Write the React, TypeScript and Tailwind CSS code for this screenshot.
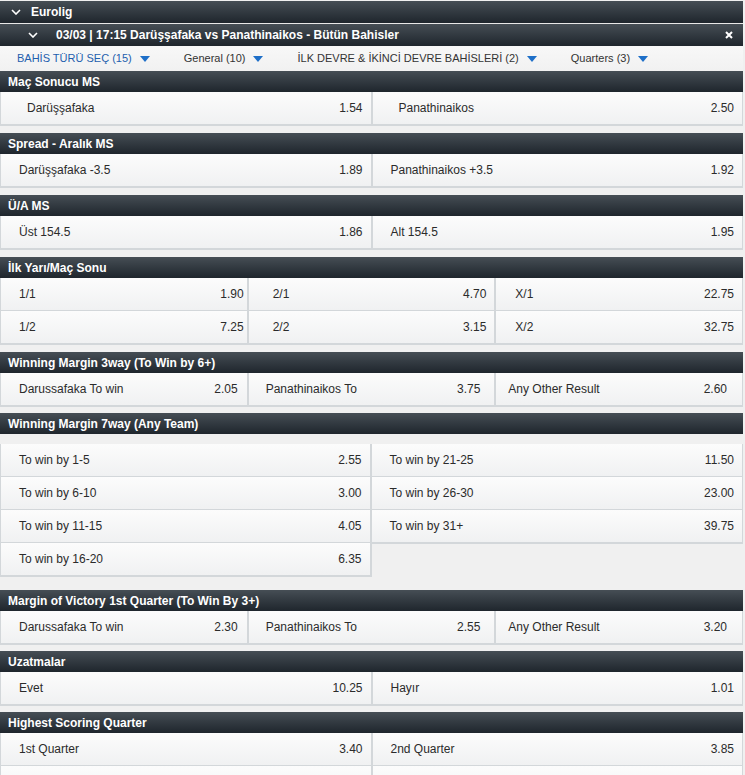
import React from "react";

type Cell = { label: string; odd: string; pl?: number; pr?: number };

type Section = { title: string; cols: 2 | 3; cells: Cell[]; tight?: boolean };

const plClass: Record<number, string> = {
  12: "pl-[12px]",
  17: "pl-[17px]",
  18: "pl-[18px]",
  19: "pl-[19px]",
  24: "pl-[24px]",
  26: "pl-[26px]",
};

const prClass: Record<number, string> = {
  3: "pr-[3px]",
  7: "pr-[7px]",
  8: "pr-[8px]",
  9: "pr-[9px]",
  14: "pr-[14px]",
  15: "pr-[15px]",
};

const sections: Section[] = [
  {
    title: "Maç Sonucu MS",
    cols: 2,
    cells: [
      { label: "Darüşşafaka", odd: "1.54", pl: 26 },
      { label: "Panathinaikos", odd: "2.50", pl: 26 },
    ],
  },
  {
    title: "Spread - Aralık MS",
    cols: 2,
    cells: [
      { label: "Darüşşafaka -3.5", odd: "1.89" },
      { label: "Panathinaikos +3.5", odd: "1.92" },
    ],
  },
  {
    title: "Ü/A MS",
    cols: 2,
    cells: [
      { label: "Üst 154.5", odd: "1.86" },
      { label: "Alt 154.5", odd: "1.95" },
    ],
  },
  {
    title: "İlk Yarı/Maç Sonu",
    cols: 3,
    cells: [
      { label: "1/1", odd: "1.90", pr: 3 },
      { label: "2/1", odd: "4.70", pl: 24 },
      { label: "X/1", odd: "22.75", pl: 19 },
      { label: "1/2", odd: "7.25", pr: 3 },
      { label: "2/2", odd: "3.15", pl: 24 },
      { label: "X/2", odd: "32.75", pl: 19 },
    ],
  },
  {
    title: "Winning Margin 3way (To Win by 6+)",
    cols: 3,
    tight: true,
    cells: [
      { label: "Darussafaka To win", odd: "2.05", pr: 9 },
      { label: "Panathinaikos To", odd: "3.75", pl: 17, pr: 14 },
      { label: "Any Other Result", odd: "2.60", pl: 12, pr: 15 },
    ],
  },
];

const sectionsAfter: Section[] = [
  {
    title: "Margin of Victory 1st Quarter (To Win By 3+)",
    cols: 3,
    tight: true,
    cells: [
      { label: "Darussafaka To win", odd: "2.30", pr: 9 },
      { label: "Panathinaikos To", odd: "2.55", pl: 17, pr: 14 },
      { label: "Any Other Result", odd: "3.20", pl: 12, pr: 15 },
    ],
  },
  {
    title: "Uzatmalar",
    cols: 2,
    tight: true,
    cells: [
      { label: "Evet", odd: "10.25" },
      { label: "Hayır", odd: "1.01" },
    ],
  },
  {
    title: "Highest Scoring Quarter",
    cols: 2,
    tight: true,
    cells: [
      { label: "1st Quarter", odd: "3.40" },
      { label: "2nd Quarter", odd: "3.85" },
      { label: "3rd Quarter", odd: "3.75" },
      { label: "4th Quarter", odd: "3.90" },
    ],
  },
];

const sevenLeft: Cell[] = [
  { label: "To win by 1-5", odd: "2.55" },
  { label: "To win by 6-10", odd: "3.00" },
  { label: "To win by 11-15", odd: "4.05" },
  { label: "To win by 16-20", odd: "6.35" },
];

const sevenRight: Cell[] = [
  { label: "To win by 21-25", odd: "11.50" },
  { label: "To win by 26-30", odd: "23.00" },
  { label: "To win by 31+", odd: "39.75" },
];

const headBg = "bg-linear-to-b from-[#464e55] to-[#1f262d]";

function Chevron() {
  return (
    <svg width="10" height="6" viewBox="0 0 10 6" className="shrink-0">
      <path d="M1 1l4 4 4-4" fill="none" stroke="#fff" strokeWidth="1.6" />
    </svg>
  );
}

function Triangle() {
  return (
    <span className="ml-[8px] inline-block h-0 w-0 border-x-[5px] border-t-[6px] border-x-transparent border-t-[#1e6fc8]" />
  );
}

function OddCell({ cell }: { cell: Cell }) {
  return (
    <div
      className={`flex h-[32px] items-center justify-between bg-linear-to-b from-[#fcfcfc] to-[#f0f1f2] text-[#2b2b2b] ${
        plClass[cell.pl ?? 18]
      } ${prClass[cell.pr ?? 8]}`}
    >
      <span>{cell.label}</span>
      <span>{cell.odd}</span>
    </div>
  );
}

function SectionHeader({ title }: { title: string }) {
  return (
    <div className={`flex h-[21px] items-center pl-[8px] font-bold text-white ${headBg}`}>
      {title}
    </div>
  );
}

function Market({ section }: { section: Section }) {
  return (
    <div className={section.tight ? "mb-[6px]" : "mb-[7px]"}>
      <SectionHeader title={section.title} />
      <div
        className={`grid gap-x-[2px] gap-y-px bg-[#d3d7da] px-px pb-[2px] ${
          section.cols === 3 ? "grid-cols-3" : "grid-cols-2"
        }`}
      >
        {section.cells.map((c, i) => (
          <OddCell key={i} cell={c} />
        ))}
      </div>
    </div>
  );
}

function FilterItem({ label, active }: { label: string; active?: boolean }) {
  return (
    <div className="flex items-center">
      <span className={active ? "text-[#1f5fae]" : "text-[#333]"}>{label}</span>
      <Triangle />
    </div>
  );
}

export default function App() {
  return (
    <div className="min-h-screen bg-[#f0f0f0] font-['Liberation_Sans',Arial,sans-serif] text-[12px] leading-none">
      <div className="w-[743px] pt-px">
        <div className={`flex h-[22px] items-center gap-[10px] pl-[11px] font-bold text-white ${headBg}`}>
          <Chevron />
          <span>Eurolig</span>
        </div>
        <div className="h-px bg-[#e8e8e8]" />
        <div className={`flex h-[22px] items-center pl-[28px] pr-[10px] font-bold text-white ${headBg}`}>
          <Chevron />
          <span className="ml-[18px] flex-1">
            03/03 | 17:15 Darüşşafaka vs Panathinaikos - Bütün Bahisler
          </span>
          <svg width="8" height="8" viewBox="0 0 8 8">
            <path d="M1 1l6 6M7 1l-6 6" stroke="#fff" strokeWidth="2" />
          </svg>
        </div>
        <div className="flex h-[25px] items-center gap-[34px] bg-linear-to-b from-[#f8f8f8] to-[#f1f1f1] pl-[17px] text-[11px]">
          <FilterItem label="BAHİS TÜRÜ SEÇ (15)" active />
          <FilterItem label="General (10)" />
          <FilterItem label="İLK DEVRE & İKİNCİ DEVRE BAHİSLERİ (2)" />
          <FilterItem label="Quarters (3)" />
        </div>

        {sections.map((s) => (
          <Market key={s.title} section={s} />
        ))}

        <div className="mb-[13px]">
          <SectionHeader title="Winning Margin 7way (Any Team)" />
          <div className="mt-[10px] grid grid-cols-2 items-start">
            <div className="flex flex-col gap-y-px bg-[#d3d7da] pb-[2px] pl-px pr-[2px]">
              {sevenLeft.map((c, i) => (
                <OddCell key={i} cell={c} />
              ))}
            </div>
            <div className="flex flex-col gap-y-px bg-[#d3d7da] pb-[2px] pr-px">
              {sevenRight.map((c, i) => (
                <OddCell key={i} cell={c} />
              ))}
            </div>
          </div>
        </div>

        {sectionsAfter.map((s) => (
          <Market key={s.title} section={s} />
        ))}
      </div>
    </div>
  );
}
